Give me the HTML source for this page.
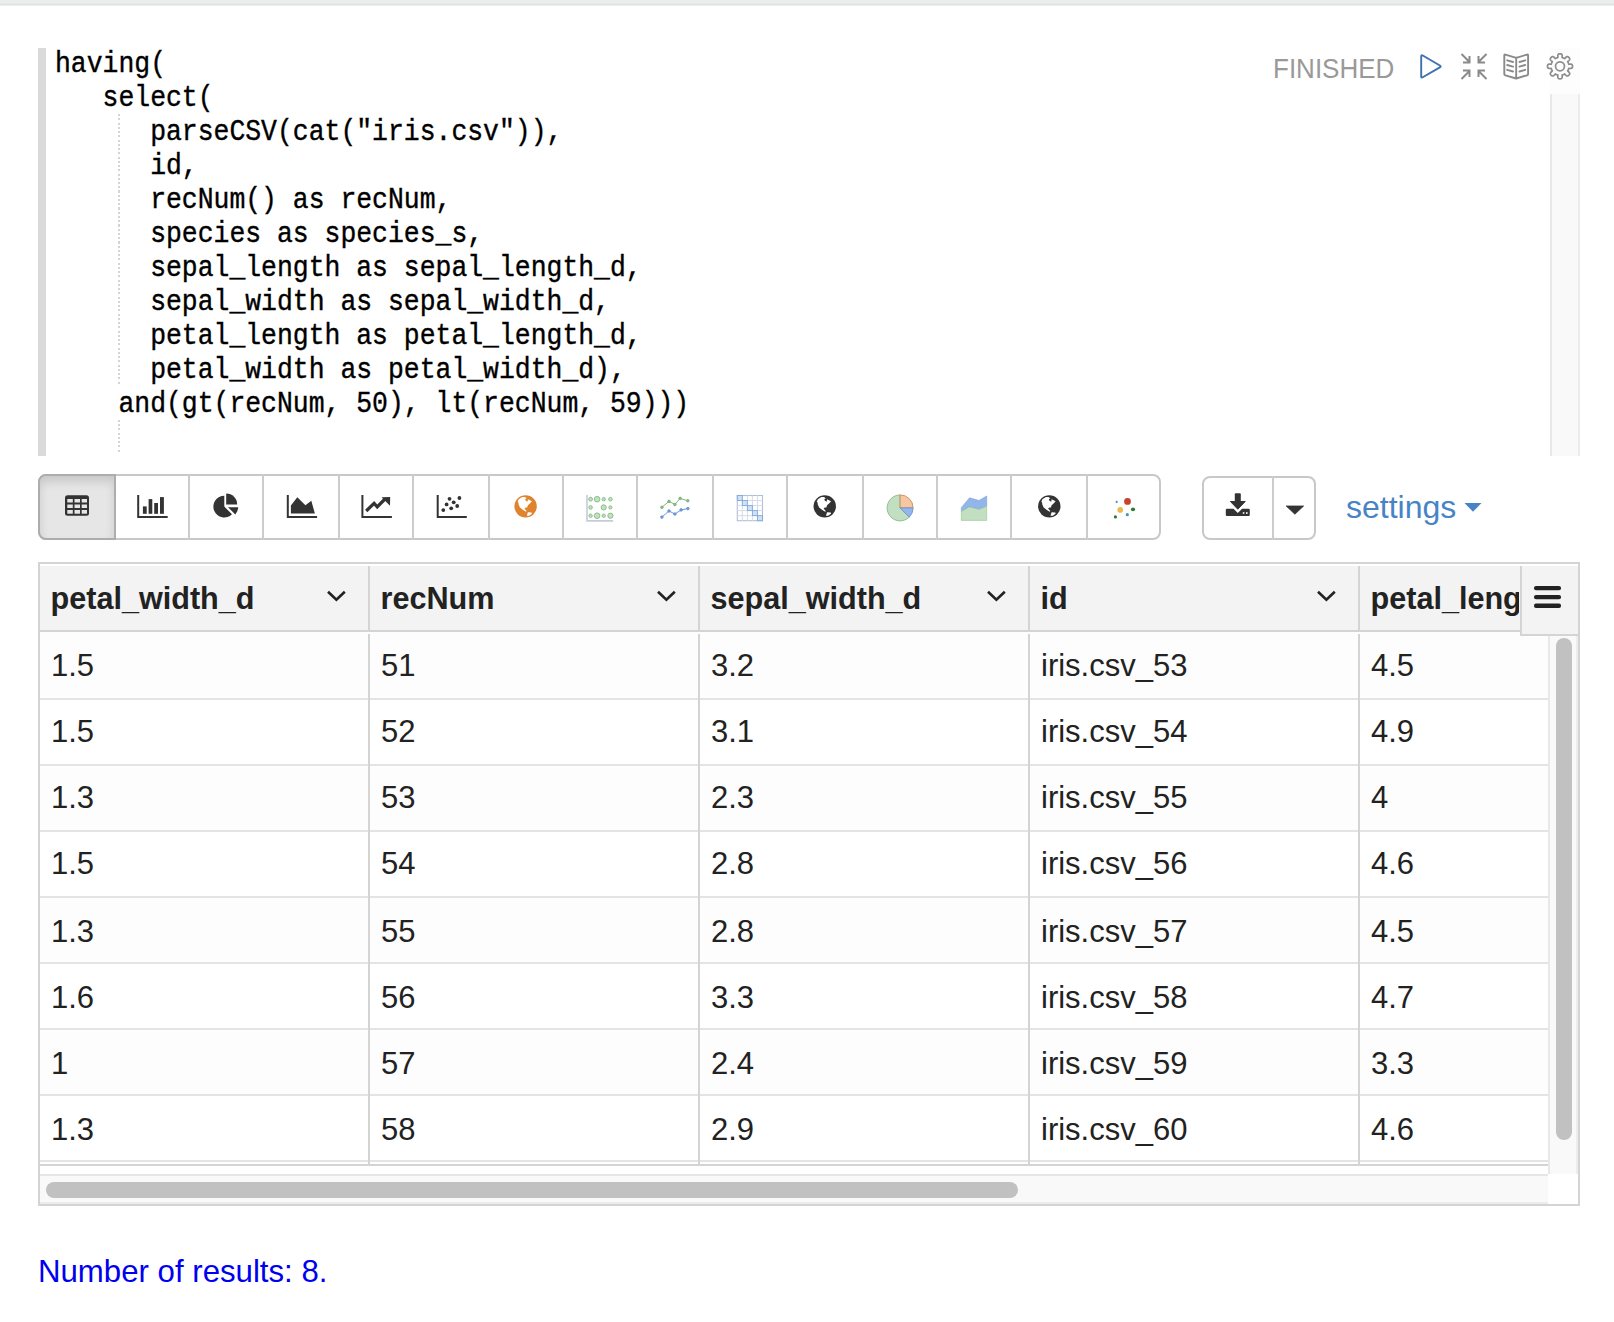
<!DOCTYPE html>
<html><head><meta charset="utf-8">
<style>
*{box-sizing:border-box;margin:0;padding:0}
html,body{width:1614px;height:1322px;overflow:hidden;background:#fff;position:relative;font-family:"Liberation Sans",sans-serif}
.abs{position:absolute}
#topbar{left:0;top:0;width:1614px;height:6px;background:linear-gradient(#eaeeef 0,#eaeeef 3px,#e2e2e2 4px,#e4e4e4 5px,#f6f6f6 6px)}
#lborder{left:38px;top:48px;width:8px;height:408px;background:#dadada}
.cl{left:55px;transform:scaleY(1.1);transform-origin:0 0;font-family:"Liberation Mono",monospace;font-size:26.43px;line-height:30.909px;color:#000;white-space:pre;-webkit-text-stroke:0.35px #000}
.guide{left:118px;width:2px;background:repeating-linear-gradient(#d4d4d4 0 2px,transparent 2px 4.25px)}
#etrack{left:1550px;top:94px;width:30px;height:362px;background:#f9f9f9;border-left:2px solid #e8e8e8;border-right:2px solid #ececec}
#etrack2{left:1550px;top:48px;width:30px;height:46px;background:#fdfdfd}
#finished{left:1273px;top:49px;font-size:26px;line-height:40px;color:#999;transform:scaleY(1.067);transform-origin:0 29px}
.tb{top:474px;height:66px;border:2px solid #ccc;background:#fff}
.sep{top:474px;width:2px;height:66px;background:#ccc}
#settings{left:1346px;top:487px;font-size:32px;line-height:40px;color:#4784c6}
#grid{left:38px;top:562px;width:1542px;height:644px;border:2px solid #d4d4d4;background:#fff}
.hdr{top:566px;height:64px;background:#f3f3f3}
.htxt{font-weight:bold;font-size:30.6px;color:#222;white-space:nowrap;overflow:hidden}
.ctxt{font-size:31px;color:#222;white-space:nowrap}
#results{left:38px;top:1252px;font-size:31.2px;line-height:40px;color:#0000f0}
</style></head><body>
<div id="topbar" class="abs"></div>
<div id="lborder" class="abs"></div>
<div id="etrack2" class="abs"></div>
<div id="etrack" class="abs"></div>
<div class="abs guide" style="top:114px;height:269.5px"></div><div class="abs guide" style="top:420px;height:31.5px"></div>
<div class="abs cl" style="top:48.1px">having(</div>
<div class="abs cl" style="top:82.1px">   select(</div>
<div class="abs cl" style="top:116.1px">      parseCSV(cat("iris.csv")),</div>
<div class="abs cl" style="top:150.1px">      id,</div>
<div class="abs cl" style="top:184.1px">      recNum() as recNum,</div>
<div class="abs cl" style="top:218.1px">      species as species_s,</div>
<div class="abs cl" style="top:252.1px">      sepal_length as sepal_length_d,</div>
<div class="abs cl" style="top:286.1px">      sepal_width as sepal_width_d,</div>
<div class="abs cl" style="top:320.1px">      petal_length as petal_length_d,</div>
<div class="abs cl" style="top:354.1px">      petal_width as petal_width_d),</div>
<div class="abs cl" style="top:388.1px">    and(gt(recNum, 50), lt(recNum, 59)))</div>

<div id="finished" class="abs">FINISHED</div>


<div class="abs" id="tbg" style="left:38px;top:474px;width:1123px;height:66px;border:2px solid #c8c8c8;border-radius:8px;background:#fff"></div>
<div class="abs" id="act" style="left:38px;top:474px;width:78px;height:66px;border:2px solid #adadad;border-radius:8px 0 0 8px;background:#e6e6e6;box-shadow:inset 0 6px 10px rgba(0,0,0,.125)"></div>
<div class="abs sep" style="left:188px"></div><div class="abs sep" style="left:262px"></div><div class="abs sep" style="left:338px"></div><div class="abs sep" style="left:412px"></div><div class="abs sep" style="left:488px"></div><div class="abs sep" style="left:562px"></div><div class="abs sep" style="left:636px"></div><div class="abs sep" style="left:712px"></div><div class="abs sep" style="left:786px"></div><div class="abs sep" style="left:862px"></div><div class="abs sep" style="left:936px"></div><div class="abs sep" style="left:1010px"></div><div class="abs sep" style="left:1086px"></div>
<div class="abs" id="dlg" style="left:1202px;top:476px;width:114px;height:64px;border:2px solid #c8c8c8;border-radius:8px;background:#fff"></div>
<div class="abs sep" style="left:1272px;top:476px;height:64px"></div>
<div id="settings" class="abs">settings</div>

<svg class="abs" style="left:0;top:0" width="1614" height="1322" viewBox="0 0 1614 1322">
<!-- header icons -->
<path d="M1421.20 56.40 Q1421.20 54.60 1422.75 55.51 L1439.85 65.49 Q1441.40 66.40 1439.85 67.31 L1422.75 77.29 Q1421.20 78.20 1421.20 76.40 Z" fill="none" stroke="#3d72ae" stroke-width="1.9" stroke-linejoin="round"/>
<g stroke="#8a8a8a" stroke-width="2" fill="none">
<path d="M1461.5 54 L1469 61.5 M1469.5 56 L1469.5 62.5 L1463 62.5"/>
<path d="M1486.5 54 L1479 61.5 M1478.5 56 L1478.5 62.5 L1485 62.5"/>
<path d="M1461.5 79 L1469 71.5 M1469.5 77 L1469.5 70.5 L1463 70.5"/>
<path d="M1486.5 79 L1479 71.5 M1478.5 77 L1478.5 70.5 L1485 70.5"/>
</g>
<g stroke="#8a8a8a" stroke-width="1.9" fill="none" stroke-linejoin="round" stroke-linecap="round">
<path d="M1504.3 55.5 Q1504.3 54.2 1505.5 54.6 L1516.2 57.8 L1526.9 54.6 Q1528.1 54.2 1528.1 55.5 L1528.1 74 Q1528.1 75 1527 75.3 L1516.2 78.5 L1505.4 75.3 Q1504.3 75 1504.3 74 Z M1516.2 57.8 L1516.2 78.5"/>
<path d="M1507.2 60.3 L1513 62 M1507.2 65 L1513 66.7 M1507.2 69.8 L1513 71.5 M1519.5 62 L1525.2 60.3 M1519.5 66.7 L1525.2 65 M1519.5 71.5 L1525.2 69.8"/>
</g>
<g id="gear"><path d="M1572.50 66.30 L1572.50 66.41 L1572.50 66.52 L1572.50 66.63 L1572.49 66.74 L1572.48 66.85 L1572.47 66.95 L1572.46 67.06 L1572.44 67.17 L1572.42 67.28 L1572.39 67.38 L1572.35 67.49 L1572.31 67.59 L1572.25 67.70 L1572.18 67.80 L1572.10 67.89 L1572.01 67.99 L1571.90 68.08 L1571.77 68.16 L1571.62 68.24 L1571.45 68.32 L1571.25 68.39 L1571.02 68.44 L1570.74 68.49 L1570.41 68.51 L1569.96 68.51 L1569.16 68.41 L1568.75 68.40 L1568.73 68.48 L1568.71 68.55 L1568.69 68.63 L1568.67 68.71 L1568.65 68.78 L1568.63 68.86 L1568.61 68.93 L1568.58 69.01 L1568.56 69.08 L1568.53 69.16 L1568.51 69.23 L1568.48 69.30 L1568.46 69.38 L1568.43 69.45 L1568.40 69.53 L1568.37 69.60 L1568.34 69.67 L1568.31 69.74 L1568.28 69.82 L1568.25 69.89 L1568.22 69.96 L1568.19 70.03 L1568.16 70.10 L1568.12 70.17 L1568.09 70.25 L1568.05 70.32 L1568.02 70.39 L1567.98 70.46 L1567.95 70.53 L1567.91 70.59 L1567.87 70.66 L1567.83 70.73 L1567.79 70.80 L1567.75 70.87 L1567.71 70.94 L1567.67 71.00 L1567.97 71.28 L1568.61 71.78 L1568.92 72.09 L1569.14 72.35 L1569.31 72.58 L1569.43 72.78 L1569.52 72.97 L1569.59 73.14 L1569.64 73.30 L1569.67 73.46 L1569.68 73.60 L1569.69 73.73 L1569.67 73.86 L1569.65 73.98 L1569.62 74.09 L1569.58 74.19 L1569.53 74.30 L1569.47 74.39 L1569.41 74.48 L1569.35 74.57 L1569.28 74.66 L1569.21 74.74 L1569.14 74.82 L1569.07 74.90 L1568.99 74.98 L1568.92 75.06 L1568.84 75.14 L1568.76 75.22 L1568.68 75.29 L1568.60 75.37 L1568.52 75.44 L1568.44 75.51 L1568.36 75.58 L1568.27 75.65 L1568.18 75.71 L1568.09 75.77 L1568.00 75.83 L1567.89 75.88 L1567.79 75.92 L1567.68 75.95 L1567.56 75.97 L1567.43 75.99 L1567.30 75.98 L1567.16 75.97 L1567.00 75.94 L1566.84 75.89 L1566.67 75.82 L1566.48 75.73 L1566.28 75.61 L1566.05 75.44 L1565.79 75.22 L1565.48 74.91 L1564.98 74.27 L1564.70 73.97 L1564.64 74.01 L1564.57 74.05 L1564.50 74.09 L1564.43 74.13 L1564.36 74.17 L1564.29 74.21 L1564.23 74.25 L1564.16 74.28 L1564.09 74.32 L1564.02 74.35 L1563.95 74.39 L1563.87 74.42 L1563.80 74.46 L1563.73 74.49 L1563.66 74.52 L1563.59 74.55 L1563.52 74.58 L1563.44 74.61 L1563.37 74.64 L1563.30 74.67 L1563.23 74.70 L1563.15 74.73 L1563.08 74.76 L1563.00 74.78 L1562.93 74.81 L1562.86 74.83 L1562.78 74.86 L1562.71 74.88 L1562.63 74.91 L1562.56 74.93 L1562.48 74.95 L1562.41 74.97 L1562.33 74.99 L1562.25 75.01 L1562.18 75.03 L1562.10 75.05 L1562.11 75.46 L1562.21 76.26 L1562.21 76.71 L1562.19 77.04 L1562.14 77.32 L1562.09 77.55 L1562.02 77.75 L1561.94 77.92 L1561.86 78.07 L1561.78 78.20 L1561.69 78.31 L1561.59 78.40 L1561.50 78.48 L1561.40 78.55 L1561.29 78.61 L1561.19 78.65 L1561.08 78.69 L1560.98 78.72 L1560.87 78.74 L1560.76 78.76 L1560.65 78.77 L1560.55 78.78 L1560.44 78.79 L1560.33 78.80 L1560.22 78.80 L1560.11 78.80 L1560.00 78.80 L1559.89 78.80 L1559.78 78.80 L1559.67 78.80 L1559.56 78.79 L1559.45 78.78 L1559.35 78.77 L1559.24 78.76 L1559.13 78.74 L1559.02 78.72 L1558.92 78.69 L1558.81 78.65 L1558.71 78.61 L1558.60 78.55 L1558.50 78.48 L1558.41 78.40 L1558.31 78.31 L1558.22 78.20 L1558.14 78.07 L1558.06 77.92 L1557.98 77.75 L1557.91 77.55 L1557.86 77.32 L1557.81 77.04 L1557.79 76.71 L1557.79 76.26 L1557.89 75.46 L1557.90 75.05 L1557.82 75.03 L1557.75 75.01 L1557.67 74.99 L1557.59 74.97 L1557.52 74.95 L1557.44 74.93 L1557.37 74.91 L1557.29 74.88 L1557.22 74.86 L1557.14 74.83 L1557.07 74.81 L1557.00 74.78 L1556.92 74.76 L1556.85 74.73 L1556.77 74.70 L1556.70 74.67 L1556.63 74.64 L1556.56 74.61 L1556.48 74.58 L1556.41 74.55 L1556.34 74.52 L1556.27 74.49 L1556.20 74.46 L1556.13 74.42 L1556.05 74.39 L1555.98 74.35 L1555.91 74.32 L1555.84 74.28 L1555.77 74.25 L1555.71 74.21 L1555.64 74.17 L1555.57 74.13 L1555.50 74.09 L1555.43 74.05 L1555.36 74.01 L1555.30 73.97 L1555.02 74.27 L1554.52 74.91 L1554.21 75.22 L1553.95 75.44 L1553.72 75.61 L1553.52 75.73 L1553.33 75.82 L1553.16 75.89 L1553.00 75.94 L1552.84 75.97 L1552.70 75.98 L1552.57 75.99 L1552.44 75.97 L1552.32 75.95 L1552.21 75.92 L1552.11 75.88 L1552.00 75.83 L1551.91 75.77 L1551.82 75.71 L1551.73 75.65 L1551.64 75.58 L1551.56 75.51 L1551.48 75.44 L1551.40 75.37 L1551.32 75.29 L1551.24 75.22 L1551.16 75.14 L1551.08 75.06 L1551.01 74.98 L1550.93 74.90 L1550.86 74.82 L1550.79 74.74 L1550.72 74.66 L1550.65 74.57 L1550.59 74.48 L1550.53 74.39 L1550.47 74.30 L1550.42 74.19 L1550.38 74.09 L1550.35 73.98 L1550.33 73.86 L1550.31 73.73 L1550.32 73.60 L1550.33 73.46 L1550.36 73.30 L1550.41 73.14 L1550.48 72.97 L1550.57 72.78 L1550.69 72.58 L1550.86 72.35 L1551.08 72.09 L1551.39 71.78 L1552.03 71.28 L1552.33 71.00 L1552.29 70.94 L1552.25 70.87 L1552.21 70.80 L1552.17 70.73 L1552.13 70.66 L1552.09 70.59 L1552.05 70.53 L1552.02 70.46 L1551.98 70.39 L1551.95 70.32 L1551.91 70.25 L1551.88 70.17 L1551.84 70.10 L1551.81 70.03 L1551.78 69.96 L1551.75 69.89 L1551.72 69.82 L1551.69 69.74 L1551.66 69.67 L1551.63 69.60 L1551.60 69.53 L1551.57 69.45 L1551.54 69.38 L1551.52 69.30 L1551.49 69.23 L1551.47 69.16 L1551.44 69.08 L1551.42 69.01 L1551.39 68.93 L1551.37 68.86 L1551.35 68.78 L1551.33 68.71 L1551.31 68.63 L1551.29 68.55 L1551.27 68.48 L1551.25 68.40 L1550.84 68.41 L1550.04 68.51 L1549.59 68.51 L1549.26 68.49 L1548.98 68.44 L1548.75 68.39 L1548.55 68.32 L1548.38 68.24 L1548.23 68.16 L1548.10 68.08 L1547.99 67.99 L1547.90 67.89 L1547.82 67.80 L1547.75 67.70 L1547.69 67.59 L1547.65 67.49 L1547.61 67.38 L1547.58 67.28 L1547.56 67.17 L1547.54 67.06 L1547.53 66.95 L1547.52 66.85 L1547.51 66.74 L1547.50 66.63 L1547.50 66.52 L1547.50 66.41 L1547.50 66.30 L1547.50 66.19 L1547.50 66.08 L1547.50 65.97 L1547.51 65.86 L1547.52 65.75 L1547.53 65.65 L1547.54 65.54 L1547.56 65.43 L1547.58 65.32 L1547.61 65.22 L1547.65 65.11 L1547.69 65.01 L1547.75 64.90 L1547.82 64.80 L1547.90 64.71 L1547.99 64.61 L1548.10 64.52 L1548.23 64.44 L1548.38 64.36 L1548.55 64.28 L1548.75 64.21 L1548.98 64.16 L1549.26 64.11 L1549.59 64.09 L1550.04 64.09 L1550.84 64.19 L1551.25 64.20 L1551.27 64.12 L1551.29 64.05 L1551.31 63.97 L1551.33 63.89 L1551.35 63.82 L1551.37 63.74 L1551.39 63.67 L1551.42 63.59 L1551.44 63.52 L1551.47 63.44 L1551.49 63.37 L1551.52 63.30 L1551.54 63.22 L1551.57 63.15 L1551.60 63.07 L1551.63 63.00 L1551.66 62.93 L1551.69 62.86 L1551.72 62.78 L1551.75 62.71 L1551.78 62.64 L1551.81 62.57 L1551.84 62.50 L1551.88 62.43 L1551.91 62.35 L1551.95 62.28 L1551.98 62.21 L1552.02 62.14 L1552.05 62.07 L1552.09 62.01 L1552.13 61.94 L1552.17 61.87 L1552.21 61.80 L1552.25 61.73 L1552.29 61.66 L1552.33 61.60 L1552.03 61.32 L1551.39 60.82 L1551.08 60.51 L1550.86 60.25 L1550.69 60.02 L1550.57 59.82 L1550.48 59.63 L1550.41 59.46 L1550.36 59.30 L1550.33 59.14 L1550.32 59.00 L1550.31 58.87 L1550.33 58.74 L1550.35 58.62 L1550.38 58.51 L1550.42 58.41 L1550.47 58.30 L1550.53 58.21 L1550.59 58.12 L1550.65 58.03 L1550.72 57.94 L1550.79 57.86 L1550.86 57.78 L1550.93 57.70 L1551.01 57.62 L1551.08 57.54 L1551.16 57.46 L1551.24 57.38 L1551.32 57.31 L1551.40 57.23 L1551.48 57.16 L1551.56 57.09 L1551.64 57.02 L1551.73 56.95 L1551.82 56.89 L1551.91 56.83 L1552.00 56.77 L1552.11 56.72 L1552.21 56.68 L1552.32 56.65 L1552.44 56.63 L1552.57 56.61 L1552.70 56.62 L1552.84 56.63 L1553.00 56.66 L1553.16 56.71 L1553.33 56.78 L1553.52 56.87 L1553.72 56.99 L1553.95 57.16 L1554.21 57.38 L1554.52 57.69 L1555.02 58.33 L1555.30 58.63 L1555.36 58.59 L1555.43 58.55 L1555.50 58.51 L1555.57 58.47 L1555.64 58.43 L1555.71 58.39 L1555.77 58.35 L1555.84 58.32 L1555.91 58.28 L1555.98 58.25 L1556.05 58.21 L1556.13 58.18 L1556.20 58.14 L1556.27 58.11 L1556.34 58.08 L1556.41 58.05 L1556.48 58.02 L1556.56 57.99 L1556.63 57.96 L1556.70 57.93 L1556.77 57.90 L1556.85 57.87 L1556.92 57.84 L1557.00 57.82 L1557.07 57.79 L1557.14 57.77 L1557.22 57.74 L1557.29 57.72 L1557.37 57.69 L1557.44 57.67 L1557.52 57.65 L1557.59 57.63 L1557.67 57.61 L1557.75 57.59 L1557.82 57.57 L1557.90 57.55 L1557.89 57.14 L1557.79 56.34 L1557.79 55.89 L1557.81 55.56 L1557.86 55.28 L1557.91 55.05 L1557.98 54.85 L1558.06 54.68 L1558.14 54.53 L1558.22 54.40 L1558.31 54.29 L1558.41 54.20 L1558.50 54.12 L1558.60 54.05 L1558.71 53.99 L1558.81 53.95 L1558.92 53.91 L1559.02 53.88 L1559.13 53.86 L1559.24 53.84 L1559.35 53.83 L1559.45 53.82 L1559.56 53.81 L1559.67 53.80 L1559.78 53.80 L1559.89 53.80 L1560.00 53.80 L1560.11 53.80 L1560.22 53.80 L1560.33 53.80 L1560.44 53.81 L1560.55 53.82 L1560.65 53.83 L1560.76 53.84 L1560.87 53.86 L1560.98 53.88 L1561.08 53.91 L1561.19 53.95 L1561.29 53.99 L1561.40 54.05 L1561.50 54.12 L1561.59 54.20 L1561.69 54.29 L1561.78 54.40 L1561.86 54.53 L1561.94 54.68 L1562.02 54.85 L1562.09 55.05 L1562.14 55.28 L1562.19 55.56 L1562.21 55.89 L1562.21 56.34 L1562.11 57.14 L1562.10 57.55 L1562.18 57.57 L1562.25 57.59 L1562.33 57.61 L1562.41 57.63 L1562.48 57.65 L1562.56 57.67 L1562.63 57.69 L1562.71 57.72 L1562.78 57.74 L1562.86 57.77 L1562.93 57.79 L1563.00 57.82 L1563.08 57.84 L1563.15 57.87 L1563.23 57.90 L1563.30 57.93 L1563.37 57.96 L1563.44 57.99 L1563.52 58.02 L1563.59 58.05 L1563.66 58.08 L1563.73 58.11 L1563.80 58.14 L1563.87 58.18 L1563.95 58.21 L1564.02 58.25 L1564.09 58.28 L1564.16 58.32 L1564.23 58.35 L1564.29 58.39 L1564.36 58.43 L1564.43 58.47 L1564.50 58.51 L1564.57 58.55 L1564.64 58.59 L1564.70 58.63 L1564.98 58.33 L1565.48 57.69 L1565.79 57.38 L1566.05 57.16 L1566.28 56.99 L1566.48 56.87 L1566.67 56.78 L1566.84 56.71 L1567.00 56.66 L1567.16 56.63 L1567.30 56.62 L1567.43 56.61 L1567.56 56.63 L1567.68 56.65 L1567.79 56.68 L1567.89 56.72 L1568.00 56.77 L1568.09 56.83 L1568.18 56.89 L1568.27 56.95 L1568.36 57.02 L1568.44 57.09 L1568.52 57.16 L1568.60 57.23 L1568.68 57.31 L1568.76 57.38 L1568.84 57.46 L1568.92 57.54 L1568.99 57.62 L1569.07 57.70 L1569.14 57.78 L1569.21 57.86 L1569.28 57.94 L1569.35 58.03 L1569.41 58.12 L1569.47 58.21 L1569.53 58.30 L1569.58 58.41 L1569.62 58.51 L1569.65 58.62 L1569.67 58.74 L1569.69 58.87 L1569.68 59.00 L1569.67 59.14 L1569.64 59.30 L1569.59 59.46 L1569.52 59.63 L1569.43 59.82 L1569.31 60.02 L1569.14 60.25 L1568.92 60.51 L1568.61 60.82 L1567.97 61.32 L1567.67 61.60 L1567.71 61.66 L1567.75 61.73 L1567.79 61.80 L1567.83 61.87 L1567.87 61.94 L1567.91 62.01 L1567.95 62.07 L1567.98 62.14 L1568.02 62.21 L1568.05 62.28 L1568.09 62.35 L1568.12 62.43 L1568.16 62.50 L1568.19 62.57 L1568.22 62.64 L1568.25 62.71 L1568.28 62.78 L1568.31 62.86 L1568.34 62.93 L1568.37 63.00 L1568.40 63.07 L1568.43 63.15 L1568.46 63.22 L1568.48 63.30 L1568.51 63.37 L1568.53 63.44 L1568.56 63.52 L1568.58 63.59 L1568.61 63.67 L1568.63 63.74 L1568.65 63.82 L1568.67 63.89 L1568.69 63.97 L1568.71 64.05 L1568.73 64.12 L1568.75 64.20 L1569.16 64.19 L1569.96 64.09 L1570.41 64.09 L1570.74 64.11 L1571.02 64.16 L1571.25 64.21 L1571.45 64.28 L1571.62 64.36 L1571.77 64.44 L1571.90 64.52 L1572.01 64.61 L1572.10 64.71 L1572.18 64.80 L1572.25 64.90 L1572.31 65.01 L1572.35 65.11 L1572.39 65.22 L1572.42 65.32 L1572.44 65.43 L1572.46 65.54 L1572.47 65.65 L1572.48 65.75 L1572.49 65.86 L1572.50 65.97 L1572.50 66.08 L1572.50 66.19Z" fill="none" stroke="#8c8c8c" stroke-width="1.7" stroke-linejoin="round"/><circle cx="1560.0" cy="66.3" r="4.5" fill="none" stroke="#8c8c8c" stroke-width="1.7"/></g>
<!-- toolbar icons -->
<g fill="#333">
<!-- table -->
<rect x="65" y="495.3" width="24" height="20.5" rx="2.5"/>
<g fill="#e6e6e6">
<rect x="67.3" y="499" width="5.5" height="3.5"/><rect x="74.5" y="499" width="5.5" height="3.5"/><rect x="81.7" y="499" width="5.3" height="3.5"/>
<rect x="67.3" y="504.5" width="5.5" height="3.5"/><rect x="74.5" y="504.5" width="5.5" height="3.5"/><rect x="81.7" y="504.5" width="5.3" height="3.5"/>
<rect x="67.3" y="510" width="5.5" height="3.7"/><rect x="74.5" y="510" width="5.5" height="3.7"/><rect x="81.7" y="510" width="5.3" height="3.7"/>
</g>
<!-- bar chart -->
<path d="M137.2 495 h2 v20.9 h28.5 v2 h-30.5z"/>
<rect x="142.9" y="506.4" width="3.8" height="7.4"/><rect x="148.6" y="499.1" width="3.7" height="14.7"/><rect x="154.2" y="503" width="3.8" height="10.8"/><rect x="160" y="497.1" width="3.9" height="16.7"/>
<!-- pie -->
<path d="M224.3 506.6 L224.3 495.7 A10.9 10.9 0 1 0 232 514.3 Z"/>
<path d="M226.2 493.4 A11 11 0 0 1 237.2 504.6 L226.2 504.6 Z"/>
<path d="M228 507.2 L238.2 507.2 A11 11 0 0 1 235.3 514.5 Z"/>
<!-- area -->
<path d="M286.8 495 h2 v20.9 h28.3 v2 h-30.3z"/>
<path d="M290.9 513.5 L290.9 505.5 L297.3 497.3 L305.4 505.2 L311.3 500.8 L314.9 513.5Z"/>
<!-- line -->
<path d="M361.4 495 h2 v20.9 h28.5 v2 h-30.5z"/>
<path d="M366.2 511 L374.1 503.3 L377.2 506.8 L384.5 499.5" stroke="#333" stroke-width="3.2" fill="none"/>
<path d="M381.5 497.2 L390.2 497 L390 505.8 Z"/>
<!-- scatter -->
<path d="M436.7 495 h2 v20.9 h28.1 v2 h-30.1z"/>
<circle cx="443.3" cy="510.1" r="1.9"/><circle cx="446.6" cy="504.4" r="1.9"/><circle cx="449.5" cy="498.8" r="1.9"/><circle cx="451.2" cy="508.3" r="1.9"/><circle cx="453.7" cy="502.3" r="1.9"/><circle cx="457.2" cy="506" r="1.9"/><circle cx="459.4" cy="498" r="1.9"/>
</g>
<!-- orange globe -->
<g transform="translate(525.6 506.4)"><circle r="11.2" fill="#e0832f"/><path d="M-8.0 -4.7 L-6.9 -7.1 L-3.4 -9.3 L-0.8 -9.3 L1.0 -8.2 L-0.5 -7.1 L0.2 -5.6 L1.9 -4.7 L2.3 -7.1 L6.3 -5.2 L4.3 -3.0 L2.3 -1.2 L1.6 1.0 L0.3 1.0 L-1.2 1.9 L-0.3 3.2 L1.0 4.5 L0.5 5.4 L-2.5 3.6 L-5.6 1.0 L-6.9 -1.6 L-7.3 -4.1Z M2.3 5.8 L6.0 6.0 L6.3 7.3 L3.4 9.3 L1.2 9.3 L1.9 7.1Z" fill="#fff"/></g>
<!-- bubble -->
<path d="M587 495 V520.9 H613.2" stroke="#c5cbd8" stroke-width="1.6" fill="none"/>
<g fill="#c3e0bf" stroke="#82bb82" stroke-width="0.9">
<circle cx="590.6" cy="499.2" r="1.9"/><circle cx="597.1" cy="499.2" r="2.8"/><circle cx="603.7" cy="499.2" r="1.7"/><circle cx="610.4" cy="499.2" r="1.8"/>
<circle cx="590.6" cy="507.4" r="1.8"/><circle cx="603.7" cy="507.4" r="2.6"/><circle cx="610.4" cy="507.4" r="1.6"/>
<circle cx="590.6" cy="515.7" r="1.7"/><circle cx="597.1" cy="515.7" r="2.8"/><circle cx="603.7" cy="515.7" r="1.7"/><circle cx="610.4" cy="515.7" r="2.6"/>
</g>
<!-- multiline -->
<g fill="none" stroke-width="1.0">
<path d="M661.9 507.3 L669 501.4 L674.9 504.5 L680.1 498.4 L687.8 500.8" stroke="#80b680"/>
<path d="M661.9 517.1 L669 511 L674.9 514 L681.1 509.9 L687.9 508.6" stroke="#6a98da"/>
</g>
<g fill="#8fc08f" stroke="#6aa56a" stroke-width="0.7"><circle cx="661.9" cy="507.3" r="1.3"/><circle cx="669" cy="501.4" r="1.3"/><circle cx="674.9" cy="504.5" r="1.3"/><circle cx="680.1" cy="498.4" r="1.3"/><circle cx="687.8" cy="500.8" r="1.3"/></g>
<g fill="#7ba3e0" stroke="#5585d0" stroke-width="0.7"><circle cx="661.9" cy="517.1" r="1.3"/><circle cx="669" cy="511" r="1.3"/><circle cx="674.9" cy="514" r="1.3"/><circle cx="681.1" cy="509.9" r="1.3"/><circle cx="687.9" cy="508.6" r="1.3"/></g>
<!-- heatmap -->
<g id="heat"><rect x="737.3" y="495.5" width="25.2" height="25.2" fill="#fff" stroke="#b2bfd8" stroke-width="1.1"/><path d="M742.3 495.5 V520.7 M737.3 500.5 H762.5" stroke="#d5dde9" stroke-width="1"/><path d="M747.4 495.5 V520.7 M737.3 505.6 H762.5" stroke="#d5dde9" stroke-width="1"/><path d="M752.4 495.5 V520.7 M737.3 510.6 H762.5" stroke="#d5dde9" stroke-width="1"/><path d="M757.5 495.5 V520.7 M737.3 515.7 H762.5" stroke="#d5dde9" stroke-width="1"/><rect x="737.3" y="495.5" width="5.0" height="5.0" fill="#c8e3fa" stroke="#86a6da" stroke-width="0.9"/><rect x="742.3" y="500.5" width="5.0" height="5.0" fill="#c8e3fa" stroke="#86a6da" stroke-width="0.9"/><rect x="747.4" y="505.6" width="5.0" height="5.0" fill="#c8e3fa" stroke="#86a6da" stroke-width="0.9"/><rect x="752.4" y="510.6" width="5.0" height="5.0" fill="#c8e3fa" stroke="#86a6da" stroke-width="0.9"/><rect x="757.5" y="515.7" width="5.0" height="5.0" fill="#c8e3fa" stroke="#86a6da" stroke-width="0.9"/></g>
<!-- black globe -->
<g transform="translate(824.75 506.4)"><circle r="11.2" fill="#333"/><path d="M-8.0 -4.7 L-6.9 -7.1 L-3.4 -9.3 L-0.8 -9.3 L1.0 -8.2 L-0.5 -7.1 L0.2 -5.6 L1.9 -4.7 L2.3 -7.1 L6.3 -5.2 L4.3 -3.0 L2.3 -1.2 L1.6 1.0 L0.3 1.0 L-1.2 1.9 L-0.3 3.2 L1.0 4.5 L0.5 5.4 L-2.5 3.6 L-5.6 1.0 L-6.9 -1.6 L-7.3 -4.1Z M2.3 5.8 L6.0 6.0 L6.3 7.3 L3.4 9.3 L1.2 9.3 L1.9 7.1Z" fill="#fff"/></g>
<!-- colored pie -->
<g transform="translate(900.1 507.9)" stroke-width="0.9">
<path d="M0 0 L9.2 9.2 A13 13 0 1 1 0 -13 Z" fill="#c3dfc1" stroke="#86bb86"/>
<path d="M0 0 L0 -13 A13 13 0 0 1 13 0 Z" fill="#f6c7a1" stroke="#c88a5c"/>
<path d="M0 0 L13 0 A13 13 0 0 1 9.2 9.2 Z" fill="#93b6ec" stroke="#6d93d3"/>
</g>
<!-- stacked area -->
<path d="M961.3 507.7 L969.5 497.8 L979 500.5 L986.7 496 L986.7 506.2 L979 509.4 L969.5 506.9 L961.3 511.6Z" fill="#92b5ea" stroke="#7aa0dc" stroke-width="0.6"/>
<path d="M961.3 511.6 L969.5 506.9 L979 509.4 L986.7 506.2 L986.7 520.4 L961.3 520.4Z" fill="#c3dfc1" stroke="#95c495" stroke-width="0.6"/>
<!-- globe 2 -->
<g transform="translate(1049.3 506.4)"><circle r="11.2" fill="#333"/><path d="M-8.0 -4.7 L-6.9 -7.1 L-3.4 -9.3 L-0.8 -9.3 L1.0 -8.2 L-0.5 -7.1 L0.2 -5.6 L1.9 -4.7 L2.3 -7.1 L6.3 -5.2 L4.3 -3.0 L2.3 -1.2 L1.6 1.0 L0.3 1.0 L-1.2 1.9 L-0.3 3.2 L1.0 4.5 L0.5 5.4 L-2.5 3.6 L-5.6 1.0 L-6.9 -1.6 L-7.3 -4.1Z M2.3 5.8 L6.0 6.0 L6.3 7.3 L3.4 9.3 L1.2 9.3 L1.9 7.1Z" fill="#fff"/></g>
<!-- color scatter -->
<circle cx="1127.5" cy="501.4" r="3.4" fill="#c9422b"/>
<circle cx="1116.7" cy="501.9" r="1.1" fill="#3a9ab8"/>
<circle cx="1120.2" cy="509.9" r="2.8" fill="#edb94c"/>
<ellipse cx="1133" cy="509.4" rx="2.1" ry="1.8" fill="#2f7a2f"/>
<circle cx="1127.3" cy="514.7" r="1.6" fill="#3b9bb8"/>
<circle cx="1115.4" cy="516.9" r="1.6" fill="#2f7a2f"/>
<!-- download -->
<g fill="#333">
<rect x="1234.8" y="493.3" width="6" height="9" rx="1"/>
<path d="M1230.4 501.5 L1245.2 501.5 L1237.8 509.2 Z" stroke="#333" stroke-width="1" stroke-linejoin="round"/>
<path d="M1227 508.8 h6.5 l4.3 4.3 l4.3 -4.3 h6.5 a1.2 1.2 0 0 1 1.2 1.2 v4.8 a1.2 1.2 0 0 1 -1.2 1.2 h-21.6 a1.2 1.2 0 0 1 -1.2 -1.2 v-4.8 a1.2 1.2 0 0 1 1.2 -1.2z"/>
</g>
<g fill="#fff"><rect x="1242.8" y="512.2" width="1.6" height="1.6"/><rect x="1246" y="512.2" width="1.6" height="1.6"/></g>
<path d="M1286.2 506 L1303.6 506 L1294.9 514.2 Z" fill="#333" stroke="#333" stroke-width="0.8" stroke-linejoin="round"/>
<!-- settings caret -->
<path d="M1464.5 503 L1481.5 503 L1473 511.8 Z" fill="#4784c6"/>
</svg>
<div class="abs" style="left:38px;top:562px;width:1542px;height:644px;border:2px solid #d4d4d4;background:#fff"></div>
<div class="abs" style="left:40px;top:566px;width:1480px;height:64px;background:#f3f3f3"></div>
<div class="abs" style="left:40px;top:630px;width:1480px;height:2px;background:#d4d4d4"></div>
<div class="abs" style="left:40px;top:632px;width:1508px;height:2px;background:#fdfdfd"></div>
<div class="abs" style="left:40px;top:634px;width:1508px;height:64px;background:#fdfdfd"></div>
<div class="abs" style="left:40px;top:698px;width:1508px;height:2px;background:#e4e4e4"></div>
<div class="abs" style="left:40px;top:700px;width:1508px;height:64px;background:#fff"></div>
<div class="abs" style="left:40px;top:764px;width:1508px;height:2px;background:#e4e4e4"></div>
<div class="abs" style="left:40px;top:766px;width:1508px;height:64px;background:#fdfdfd"></div>
<div class="abs" style="left:40px;top:830px;width:1508px;height:2px;background:#e4e4e4"></div>
<div class="abs" style="left:40px;top:832px;width:1508px;height:64px;background:#fff"></div>
<div class="abs" style="left:40px;top:896px;width:1508px;height:2px;background:#e4e4e4"></div>
<div class="abs" style="left:40px;top:898px;width:1508px;height:64px;background:#fdfdfd"></div>
<div class="abs" style="left:40px;top:962px;width:1508px;height:2px;background:#e4e4e4"></div>
<div class="abs" style="left:40px;top:964px;width:1508px;height:64px;background:#fff"></div>
<div class="abs" style="left:40px;top:1028px;width:1508px;height:2px;background:#e4e4e4"></div>
<div class="abs" style="left:40px;top:1030px;width:1508px;height:64px;background:#fdfdfd"></div>
<div class="abs" style="left:40px;top:1094px;width:1508px;height:2px;background:#e4e4e4"></div>
<div class="abs" style="left:40px;top:1096px;width:1508px;height:64px;background:#fff"></div>
<div class="abs" style="left:40px;top:1160px;width:1508px;height:2px;background:#e4e4e4"></div>
<div class="abs" style="left:368px;top:566px;width:2px;height:64px;background:#d4d4d4"></div>
<div class="abs" style="left:368px;top:634px;width:2px;height:530px;background:#d4d4d4"></div>
<div class="abs" style="left:698px;top:566px;width:2px;height:64px;background:#d4d4d4"></div>
<div class="abs" style="left:698px;top:634px;width:2px;height:530px;background:#d4d4d4"></div>
<div class="abs" style="left:1028px;top:566px;width:2px;height:64px;background:#d4d4d4"></div>
<div class="abs" style="left:1028px;top:634px;width:2px;height:530px;background:#d4d4d4"></div>
<div class="abs" style="left:1358px;top:566px;width:2px;height:64px;background:#d4d4d4"></div>
<div class="abs" style="left:1358px;top:634px;width:2px;height:530px;background:#d4d4d4"></div>
<div class="abs htxt" style="left:50.5px;top:580px;width:280px;line-height:36px">petal_width_d</div>
<div class="abs htxt" style="left:380.5px;top:580px;width:280px;line-height:36px">recNum</div>
<div class="abs htxt" style="left:710.5px;top:580px;width:280px;line-height:36px">sepal_width_d</div>
<div class="abs htxt" style="left:1040.5px;top:580px;width:280px;line-height:36px">id</div>
<div class="abs htxt" style="left:1370.5px;top:580px;width:148px;line-height:36px">petal_length_d</div>
<div class="abs ctxt" style="left:51px;top:648px;line-height:36px">1.5</div>
<div class="abs ctxt" style="left:381px;top:648px;line-height:36px">51</div>
<div class="abs ctxt" style="left:711px;top:648px;line-height:36px">3.2</div>
<div class="abs ctxt" style="left:1041px;top:648px;line-height:36px">iris.csv_53</div>
<div class="abs ctxt" style="left:1371px;top:648px;line-height:36px">4.5</div>
<div class="abs ctxt" style="left:51px;top:714px;line-height:36px">1.5</div>
<div class="abs ctxt" style="left:381px;top:714px;line-height:36px">52</div>
<div class="abs ctxt" style="left:711px;top:714px;line-height:36px">3.1</div>
<div class="abs ctxt" style="left:1041px;top:714px;line-height:36px">iris.csv_54</div>
<div class="abs ctxt" style="left:1371px;top:714px;line-height:36px">4.9</div>
<div class="abs ctxt" style="left:51px;top:780px;line-height:36px">1.3</div>
<div class="abs ctxt" style="left:381px;top:780px;line-height:36px">53</div>
<div class="abs ctxt" style="left:711px;top:780px;line-height:36px">2.3</div>
<div class="abs ctxt" style="left:1041px;top:780px;line-height:36px">iris.csv_55</div>
<div class="abs ctxt" style="left:1371px;top:780px;line-height:36px">4</div>
<div class="abs ctxt" style="left:51px;top:846px;line-height:36px">1.5</div>
<div class="abs ctxt" style="left:381px;top:846px;line-height:36px">54</div>
<div class="abs ctxt" style="left:711px;top:846px;line-height:36px">2.8</div>
<div class="abs ctxt" style="left:1041px;top:846px;line-height:36px">iris.csv_56</div>
<div class="abs ctxt" style="left:1371px;top:846px;line-height:36px">4.6</div>
<div class="abs ctxt" style="left:51px;top:914px;line-height:36px">1.3</div>
<div class="abs ctxt" style="left:381px;top:914px;line-height:36px">55</div>
<div class="abs ctxt" style="left:711px;top:914px;line-height:36px">2.8</div>
<div class="abs ctxt" style="left:1041px;top:914px;line-height:36px">iris.csv_57</div>
<div class="abs ctxt" style="left:1371px;top:914px;line-height:36px">4.5</div>
<div class="abs ctxt" style="left:51px;top:980px;line-height:36px">1.6</div>
<div class="abs ctxt" style="left:381px;top:980px;line-height:36px">56</div>
<div class="abs ctxt" style="left:711px;top:980px;line-height:36px">3.3</div>
<div class="abs ctxt" style="left:1041px;top:980px;line-height:36px">iris.csv_58</div>
<div class="abs ctxt" style="left:1371px;top:980px;line-height:36px">4.7</div>
<div class="abs ctxt" style="left:51px;top:1046px;line-height:36px">1</div>
<div class="abs ctxt" style="left:381px;top:1046px;line-height:36px">57</div>
<div class="abs ctxt" style="left:711px;top:1046px;line-height:36px">2.4</div>
<div class="abs ctxt" style="left:1041px;top:1046px;line-height:36px">iris.csv_59</div>
<div class="abs ctxt" style="left:1371px;top:1046px;line-height:36px">3.3</div>
<div class="abs ctxt" style="left:51px;top:1112px;line-height:36px">1.3</div>
<div class="abs ctxt" style="left:381px;top:1112px;line-height:36px">58</div>
<div class="abs ctxt" style="left:711px;top:1112px;line-height:36px">2.9</div>
<div class="abs ctxt" style="left:1041px;top:1112px;line-height:36px">iris.csv_60</div>
<div class="abs ctxt" style="left:1371px;top:1112px;line-height:36px">4.6</div>
<div class="abs" style="left:1520px;top:566px;width:58px;height:70px;background:#f3f3f3;border-left:2px solid #d4d4d4;border-bottom:2px solid #d4d4d4"></div>
<div class="abs" style="left:40px;top:1164px;width:1508px;height:2px;background:#d4d4d4"></div>
<div class="abs" style="left:40px;top:1174px;width:1508px;height:30px;background:#f9f9f9;border-top:2px solid #e6e6e6;border-bottom:2px solid #ececec"></div>
<div class="abs" style="left:46px;top:1182px;width:972px;height:16px;border-radius:8px;background:#c1c1c1"></div>
<div class="abs" style="left:1548px;top:636px;width:30px;height:538px;background:#f9f9f9;border-left:2px solid #e8e8e8;border-right:2px solid #ededed"></div>
<div class="abs" style="left:1556px;top:638px;width:16px;height:502px;border-radius:8px;background:#c1c1c1"></div>
<svg class="abs" style="left:0;top:0" width="1614" height="1322"><path d="M328.0 591.8 L336.4 599.8 L344.8 591.8" fill="none" stroke="#222" stroke-width="2.6"/><path d="M658.0 591.8 L666.4 599.8 L674.8 591.8" fill="none" stroke="#222" stroke-width="2.6"/><path d="M988.0 591.8 L996.4 599.8 L1004.8 591.8" fill="none" stroke="#222" stroke-width="2.6"/><path d="M1318.0 591.8 L1326.4 599.8 L1334.8 591.8" fill="none" stroke="#222" stroke-width="2.6"/><g fill="#222"><rect x="1534" y="585.9" width="27" height="4.4" rx="2"/><rect x="1534" y="594.9" width="27" height="4.4" rx="2"/><rect x="1534" y="603.6" width="27" height="4.4" rx="2"/></g></svg>
<div id="results" class="abs">Number of results: 8.</div>
</body></html>
